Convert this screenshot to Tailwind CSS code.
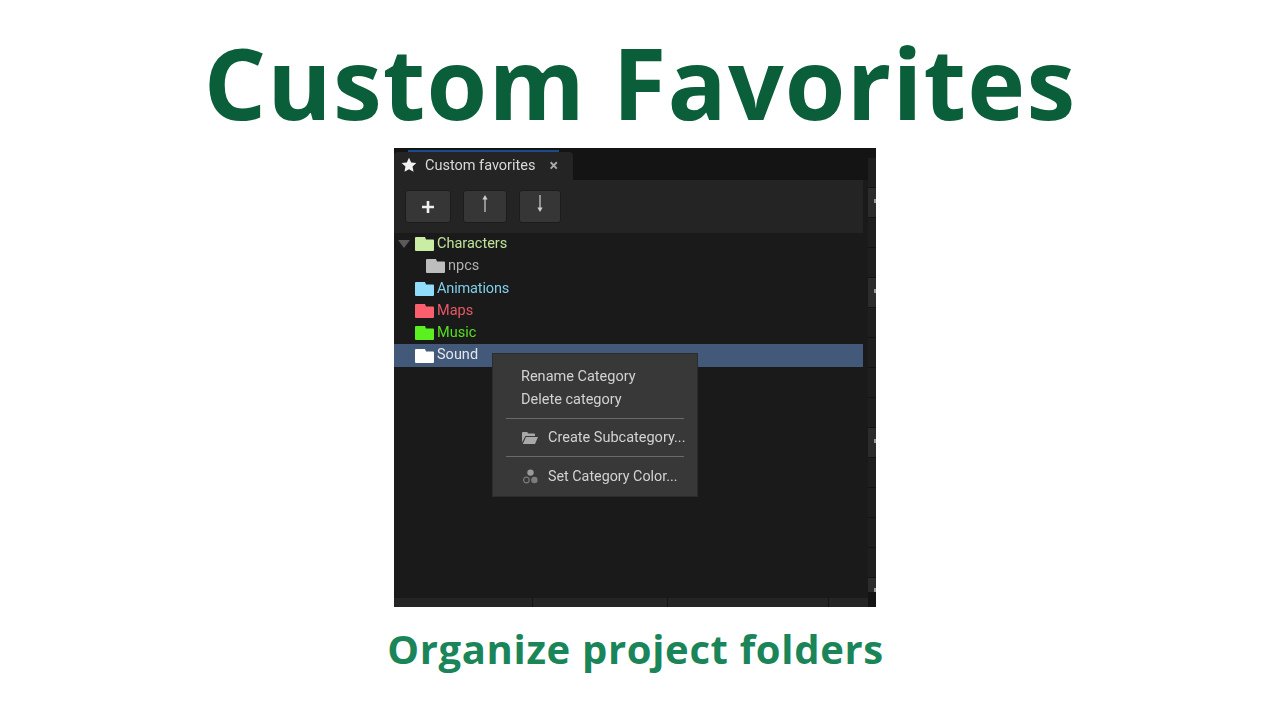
<!DOCTYPE html>
<html lang="en">
<head>
  <meta charset="UTF-8">
  <title>Custom Favorites</title>
  <script src="https://cdn.jsdelivr.net/npm/@tailwindcss/browser@4"></script>
</head>
<body class="bg-white w-[1280px] h-[720px] overflow-hidden font-['Open_Sans',sans-serif]">
  <div class="flex flex-col items-center">
    <h1 class="h-[148px] pt-[16.500px] text-[98px] leading-[131px] font-bold text-[#0b5e3a] tracking-[1.2px] whitespace-nowrap">Custom Favorites</h1>

    <!-- editor panel -->
    <div class="flex w-[482px] h-[459px] ml-[-10px] bg-[#1a1a1a] font-['Roboto',sans-serif] text-[14.5px] leading-[22.3px] blur-[0.4px]">
      <div class="relative flex flex-col w-[474px] shrink-0">
        <div class="flex items-end h-[32px] bg-[#141414]">
          <div class="relative flex items-center w-[179px] h-[28px] pl-[7px] pt-[1px] bg-[#242424] rounded-t-[4px] text-[#d8d8d8]">
            <div class="absolute top-[-2px] left-[14px] right-[14px] h-[2px] bg-[#1c4a8a]"></div>
            <svg class="w-[16px] h-[16px] mr-[8px] mb-[3px]" viewBox="0 0 24 24" fill="#f2f2f2"><path d="M12 1l3.300 7.100 7.700.9-5.700 5.300 1.500 7.700-6.800-3.800L5.200 22l1.500-7.700L1 9l7.700-.9z"/></svg>
            <span>Custom favorites</span>
            <span class="ml-[14px] text-[16px] font-bold text-[#a8a8a8]">×</span>
          </div>
        </div>
        <div class="flex items-start h-[53px] w-[469px] pt-[10px] pl-[11px] bg-[#242424]">
          <div class="flex items-center justify-center w-[46px] h-[33px] rounded-[3px] bg-[#363636] border border-[#1c1c1c]">
            <svg class="w-[12px] h-[12px]" viewBox="0 0 12 12" fill="#f0f0f0"><path d="M4.700 0h2.600v4.700H12v2.600H7.300V12H4.700V7.300H0V4.700h4.700z"/></svg>
          </div>
          <div class="flex items-start justify-center w-[44px] h-[33px] ml-[12px] pt-[4px] rounded-[3px] bg-[#363636] border border-[#1c1c1c]">
            <svg class="w-[10px] h-[17px]" viewBox="0 0 10 17" fill="#cfcfcf"><path d="M5 0l2.600 4.500H5.600V17H4.400V4.500H2.400z"/></svg>
          </div>
          <div class="flex items-start justify-center w-[42px] h-[33px] ml-[12px] pt-[4px] rounded-[3px] bg-[#363636] border border-[#1c1c1c]">
            <svg class="w-[10px] h-[17px]" viewBox="0 0 10 17" fill="#cfcfcf"><path d="M5 17l2.600-4.500H5.600V0H4.400v12.500H2.400z"/></svg>
          </div>
        </div>

        <!-- category tree -->
        <div class="w-[469px]">
          <div class="flex items-center h-[22.3px] pl-[4px] text-[#bfe39a]">
            <svg class="w-[12px] h-[8px] mr-[5px]" viewBox="0 0 12 8" fill="#5a5a5a"><path d="M0 0h12L6 8z"/></svg>
            <svg class="w-[19px] h-[14px] mr-[3px]" viewBox="0 0 19 14" fill="#c9eda2"><path d="M1 0h9l1 2.500h7a1 1 0 0 1 1 1V13a1 1 0 0 1-1 1H1a1 1 0 0 1-1-1V1a1 1 0 0 1 1-1z"/></svg>
            <span>Characters</span>
          </div>
          <div class="flex items-center h-[22.3px] pl-[32px] text-[#b0b0b0]">
            <svg class="w-[19px] h-[14px] mr-[3px]" viewBox="0 0 19 14" fill="#bdbdbd"><path d="M1 0h9l1 2.500h7a1 1 0 0 1 1 1V13a1 1 0 0 1-1 1H1a1 1 0 0 1-1-1V1a1 1 0 0 1 1-1z"/></svg>
            <span>npcs</span>
          </div>
          <div class="flex items-center h-[22.3px] pl-[21px] text-[#7fcfe8]">
            <svg class="w-[19px] h-[14px] mr-[3px]" viewBox="0 0 19 14" fill="#8fdcfb"><path d="M1 0h9l1 2.500h7a1 1 0 0 1 1 1V13a1 1 0 0 1-1 1H1a1 1 0 0 1-1-1V1a1 1 0 0 1 1-1z"/></svg>
            <span class="tracking-[-0.15px]">Animations</span>
          </div>
          <div class="flex items-center h-[22.3px] pl-[21px] text-[#e85866]">
            <svg class="w-[19px] h-[14px] mr-[3px]" viewBox="0 0 19 14" fill="#fb5f6d"><path d="M1 0h9l1 2.500h7a1 1 0 0 1 1 1V13a1 1 0 0 1-1 1H1a1 1 0 0 1-1-1V1a1 1 0 0 1 1-1z"/></svg>
            <span>Maps</span>
          </div>
          <div class="flex items-center h-[22.3px] pl-[21px] text-[#55e01f]">
            <svg class="w-[19px] h-[14px] mr-[3px]" viewBox="0 0 19 14" fill="#5bf020"><path d="M1 0h9l1 2.500h7a1 1 0 0 1 1 1V13a1 1 0 0 1-1 1H1a1 1 0 0 1-1-1V1a1 1 0 0 1 1-1z"/></svg>
            <span>Music</span>
          </div>
          <div class="flex items-center h-[22.3px] pl-[21px] bg-[#42597a] text-[#e2e6ec]">
            <svg class="w-[19px] h-[14px] mr-[3px]" viewBox="0 0 19 14" fill="#ffffff"><path d="M1 0h9l1 2.500h7a1 1 0 0 1 1 1V13a1 1 0 0 1-1 1H1a1 1 0 0 1-1-1V1a1 1 0 0 1 1-1z"/></svg>
            <span>Sound</span>
          </div>
        </div>

        <div class="flex mt-auto h-[9px] gap-[1px] bg-[#141414]">
          <div class="w-[138px] bg-[#252525]"></div>
          <div class="w-[134px] bg-[#252525]"></div>
          <div class="w-[160px] bg-[#252525]"></div>
          <div class="flex-1 bg-[#252525]"></div>
        </div>

        <!-- context menu -->
        <div class="absolute left-[98px] top-[205px] w-[206px] h-[144px] pt-[11px] bg-[#383838] border border-[#2c2c2c] text-[#d2d2d2] text-[14.5px]">
          <div class="h-[23px] pl-[28px] leading-[23px]">Rename Category</div>
          <div class="h-[23px] pl-[28px] leading-[23px]">Delete category</div>
          <div class="h-[1px] mx-[13px] mt-[7px] bg-[#6a6a6a]"></div>
          <div class="flex items-center h-[37px] pl-[29px] pt-[1px]">
            <svg class="w-[16px] h-[12px] mr-[10px]" viewBox="0 0 16 12" fill="#a8a8a8"><path d="M0 1a1 1 0 0 1 1-1h4l1.500 1.500H12a1 1 0 0 1 1 1V4H3.500L0 10.500zM4 5h12l-3 7H.8z"/></svg>
            <span class="whitespace-nowrap">Create Subcategory...</span>
          </div>
          <div class="h-[1px] mx-[13px] bg-[#6a6a6a]"></div>
          <div class="flex items-center h-[37px] pl-[30px] pt-[1px]">
            <svg class="w-[15px] h-[15px] mr-[10px]" viewBox="0 0 15 15"><circle cx="7.500" cy="3.600" r="3.200" fill="#9a9a9a"/><circle cx="3.400" cy="11" r="2.800" fill="none" stroke="#7a7a7a" stroke-width="1.200"/><circle cx="11.400" cy="11" r="3.200" fill="#7c7c7c"/></svg>
            <span class="whitespace-nowrap text-[14.3px]">Set Category Color...</span>
          </div>
        </div>
      </div>

      <!-- right dock strip -->
      <div class="flex flex-col w-[8px] pt-[10px] gap-[1px] bg-[#141414]">
        <div class="h-[29px] bg-[#1f1f1f]"></div>
        <div class="relative h-[29px] bg-[#2c2c2c]"><div class="absolute right-0 top-[11px] w-[2px] h-[4px] bg-[#999]"></div></div>
        <div class="h-[29px] bg-[#1f1f1f]"></div>
        <div class="h-[29px] bg-[#1f1f1f]"></div>
        <div class="relative h-[29px] bg-[#2c2c2c]"><div class="absolute right-0 top-[11px] w-[2px] h-[4px] bg-[#999]"></div></div>
        <div class="h-[29px] bg-[#1f1f1f]"></div>
        <div class="h-[29px] bg-[#1f1f1f]"></div>
        <div class="h-[29px] bg-[#1f1f1f]"></div>
        <div class="h-[29px] bg-[#1f1f1f]"></div>
        <div class="relative h-[29px] bg-[#2c2c2c]"><div class="absolute right-0 top-[11px] w-[2px] h-[4px] bg-[#999]"></div></div>
        <div class="h-[29px] bg-[#1f1f1f]"></div>
        <div class="h-[29px] bg-[#1f1f1f]"></div>
        <div class="h-[29px] bg-[#1f1f1f]"></div>
        <div class="h-[29px] bg-[#1f1f1f]"></div>
        <div class="relative h-[14px] bg-[#2c2c2c]"><div class="absolute right-0 top-[10px] w-[2px] h-[4px] bg-[#999]"></div></div>
      </div>
    </div>

    <h2 class="mt-[14px] ml-[-9px] text-[40px] leading-[55px] font-bold text-[#1a8558] tracking-[0.67px] whitespace-nowrap">Organize project folders</h2>
  </div>
</body>
</html>
